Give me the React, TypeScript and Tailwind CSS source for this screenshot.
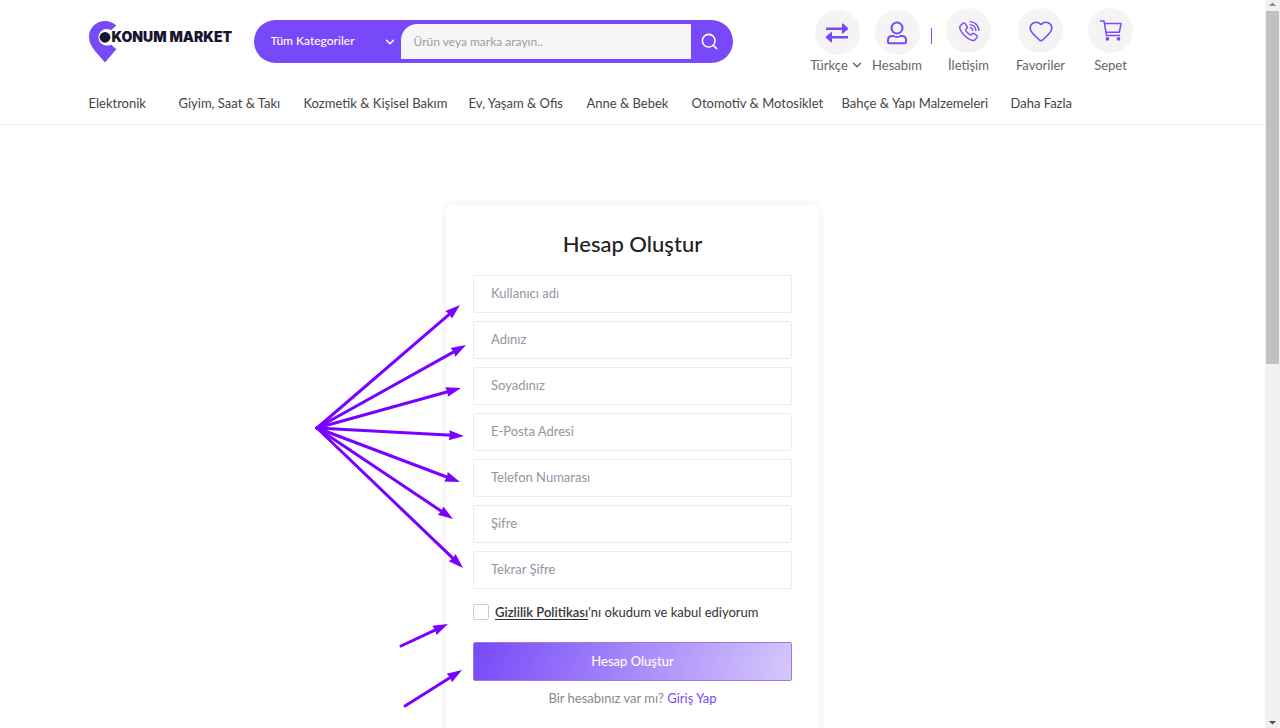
import { ReactNode } from "react";
import { ChevronDown, Heart, Search } from "lucide-react";

const categories = [
  "Elektronik",
  "Giyim, Saat & Takı",
  "Kozmetik & Kişisel Bakım",
  "Ev, Yaşam & Ofis",
  "Anne & Bebek",
  "Otomotiv & Motosiklet",
  "Bahçe & Yapı Malzemeleri",
  "Daha Fazla",
];

const fields = [
  { id: "username", label: "Kullanıcı adı", type: "text" },
  { id: "firstName", label: "Adınız", type: "text" },
  { id: "lastName", label: "Soyadınız", type: "text" },
  { id: "email", label: "E-Posta Adresi", type: "email" },
  { id: "phone", label: "Telefon Numarası", type: "tel" },
  { id: "password", label: "Şifre", type: "password" },
  { id: "passwordRepeat", label: "Tekrar Şifre", type: "password" },
];

// x1, y1, x2, y2 in the coordinates of the arrow layer
const arrows = [
  [17, 137, 160, 14],
  [17, 137, 166, 54],
  [17, 137, 161, 97],
  [17, 137, 164, 145],
  [17, 137, 160, 191],
  [17, 137, 153, 228],
  [17, 137, 163, 277],
  [101, 355, 148, 333],
  [105, 415, 162, 379],
];

function Logo() {
  return (
    <a href="#" aria-label="Konum Market" className="flex w-[165px] shrink-0 items-start">
      <svg width="28" height="42" viewBox="0 0 28 42" className="shrink-0">
        <path
          d="M16 0C7.200 0 0 7 0 15.800C0 20.800 2.300 25.300 5.600 29.500L16 41.500L27.300 28.200L22 23.400A8.300 8.300 0 1 1 22 9.200L27.300 4.600C24 1.600 20.400 0 16 0Z"
          fill="#7749f8"
        />
        <circle cx="16" cy="16.300" r="5.400" fill="#17142f" />
      </svg>
      <span className="-ml-[5px] mt-2 font-['Inter'] text-[14px]/4 font-black whitespace-nowrap text-[#17142f]">
        KONUM MARKET
      </span>
    </a>
  );
}

function SwapIcon() {
  return (
    <svg width="24" height="20" viewBox="0 0 24 20" fill="#7749f8">
      <path d="M1 4.500H17V1.200Q17 0 18 .600L23 5Q23.600 5.700 23 6.300L18 10.500Q17 11.200 17 10V7H1Z" />
      <path d="M23 13H7V10Q7 8.600 6 9.300L1 13.600Q.400 14.300 1 15L6 19.200Q7 20 7 18.600V15.500H23Z" />
    </svg>
  );
}

function AccountIcon() {
  return (
    <svg width="22" height="24" viewBox="0 0 22 24" fill="none" stroke="#7749f8" strokeWidth="2">
      <circle cx="11" cy="7" r="5.500" />
      <path
        d="M2 21V19Q2 15.500 5.500 15H7.500Q11 17 14.500 15H16.500Q20 15.500 20 19V21Q20 22.200 18.800 22.200H3.200Q2 22.200 2 21Z"
        strokeLinejoin="round"
      />
    </svg>
  );
}

function CallIcon() {
  return (
    <svg
      width="22"
      height="22"
      viewBox="0 0 22 22"
      fill="none"
      stroke="#7749f8"
      strokeWidth="1.400"
      strokeLinecap="round"
      strokeLinejoin="round"
    >
      <path d="M3 5L5 3.200Q6.200 2.400 7.100 3.600L9.100 6.500Q9.900 7.700 8.700 8.600L7.800 9.400Q7.300 10 7.800 10.700Q9.500 13.300 12 14.800Q12.700 15.300 13.200 14.700L14.100 13.800Q15 12.900 16.100 13.700L18.700 15.500Q20 16.400 19 17.600L17.400 19.400Q15.700 21 13.400 20.100Q5.500 17 2 9Q1.100 6.700 3 5Z" />
      <path d="M12.300 7.600Q14.500 7.900 14.900 10.300M12.200 4.600Q17.200 5.200 17.900 10.300M12.200 1.600Q20 2.400 20.900 10.300" />
    </svg>
  );
}

function CartIcon() {
  return (
    <svg
      width="22"
      height="21"
      viewBox="0 0 22 21"
      fill="none"
      stroke="#7749f8"
      strokeWidth="1.500"
      strokeLinejoin="round"
    >
      <path d="M0 1H4L6.500 15.500H20M4.400 3.500H21L19.300 12.300H6" />
      <circle cx="7.500" cy="18.800" r="1.100" fill="#7749f8" />
      <circle cx="18.500" cy="18.800" r="1.100" fill="#7749f8" />
    </svg>
  );
}

function HeaderLink({
  label,
  className,
  children,
  chevron,
}: {
  label: string;
  className: string;
  children: ReactNode;
  chevron?: boolean;
}) {
  return (
    <a
      href="#"
      className={`flex shrink-0 flex-col items-center text-[13px]/5 whitespace-nowrap text-[#666] ${className}`}
    >
      <span className="flex size-[45px] items-center justify-center rounded-full bg-[#f4f4f4]">
        {children}
      </span>
      <span className="flex items-center gap-0.5">
        {label}
        {chevron && <ChevronDown size={14} strokeWidth={2.5} />}
      </span>
    </a>
  );
}

function Header() {
  return (
    <header className="border-b border-[#ebebeb]">
      <div className="mx-auto h-[124px] max-w-[1088px]">
        <div className="flex h-[93px] items-start">
          <div className="pt-[21px]">
            <Logo />
          </div>
          <form className="mt-5 flex h-[43px] w-[479px] shrink-0 items-center rounded-full bg-[#7749f8] text-white">
            <div className="relative w-[147px]">
              <select
                aria-label="Kategori"
                className="block w-full appearance-none bg-transparent pb-0.5 pl-[17px] text-[12px]/5 font-medium outline-none"
              >
                <option>Tüm Kategoriler</option>
              </select>
              <ChevronDown
                size={14}
                strokeWidth={2.5}
                className="pointer-events-none absolute top-1 right-1"
              />
            </div>
            <input
              type="search"
              aria-label="Ürün ara"
              placeholder="Ürün veya marka arayın.."
              className="h-[35px] w-[290px] rounded-tl-2xl bg-[#f6f6f6] px-[13px] text-[12px] text-[#555] outline-none placeholder:text-[#9b9ba8]"
            />
            <button type="submit" aria-label="Ara" className="flex flex-1 items-center pl-[9px]">
              <Search size={19} strokeWidth={2} />
            </button>
          </form>
          <div className="ml-[77px] flex items-start pt-2.5">
            <HeaderLink label="Türkçe" className="w-[55px]" chevron>
              <SwapIcon />
            </HeaderLink>
            <HeaderLink label="Hesabım" className="w-[65px]">
              <AccountIcon />
            </HeaderLink>
            <span className="mt-[18px] ml-px h-4 w-px bg-[#7749f8]" />
          </div>
          <div className="flex items-start pt-2">
            <HeaderLink label="İletişim" className="w-[74px] gap-0.5">
              <CallIcon />
            </HeaderLink>
            <HeaderLink label="Favoriler" className="w-[70px] gap-0.5">
              <Heart size={26} strokeWidth={1.5} className="text-[#7749f8]" />
            </HeaderLink>
            <HeaderLink label="Sepet" className="w-[70px] gap-0.5">
              <CartIcon />
            </HeaderLink>
          </div>
        </div>
        <nav className="grid grid-cols-[90px_125px_165px_118px_105px_150px_169px_auto] text-[13px]/5 whitespace-nowrap text-[#444]">
          {categories.map((name) => (
            <a key={name} href="#">
              {name}
            </a>
          ))}
        </nav>
      </div>
    </header>
  );
}

function Arrows() {
  return (
    <svg
      width="180"
      height="430"
      viewBox="0 0 180 430"
      className="pointer-events-none absolute top-[86px] -left-[146px]"
    >
      {arrows.map(([x1, y1, x2, y2]) => {
        const length = Math.hypot(x2 - x1, y2 - y1);
        const angle = (Math.atan2(y2 - y1, x2 - x1) * 180) / Math.PI;
        return (
          <g key={`${x2}-${y2}`} transform={`translate(${x1} ${y1}) rotate(${angle})`}>
            <line x2={length - 12} stroke="#7a00ff" strokeWidth="3" strokeLinecap="round" />
            <path d={`M${length} 0L${length - 15} -5L${length - 14} 0L${length - 15} 5Z`} fill="#7a00ff" />
          </g>
        );
      })}
    </svg>
  );
}

function RegisterCard() {
  return (
    <section className="relative mx-auto mt-20 w-[373px] rounded-md bg-white px-[27px] pt-[23px] pb-10 shadow-[0_0_10px_rgba(0,0,0,0.08)]">
      <h1 className="text-center text-[22px]/8 font-medium text-[#222]">Hesap Oluştur</h1>
      <form className="mt-[15px]">
        <div className="flex flex-col gap-2">
          {fields.map((field) => (
            <input
              key={field.id}
              id={field.id}
              type={field.type}
              aria-label={field.label}
              placeholder={field.label}
              className="h-[38px] w-full rounded-xs border border-[#ebebeb] px-[17px] pb-0.5 text-[13px] text-[#333] outline-none placeholder:text-[#9494a2]"
            />
          ))}
        </div>
        <div className="mt-[13px] flex items-center gap-[6px] text-[13px]/5 text-[#333]">
          <input
            id="privacy"
            type="checkbox"
            className="size-4 appearance-none rounded-xs border border-[#ccc] bg-white"
          />
          <label htmlFor="privacy">
            <a href="#" className="font-semibold underline underline-offset-2">
              Gizlilik Politikası
            </a>
            'nı okudum ve kabul ediyorum
          </label>
        </div>
        <button
          type="submit"
          className="mt-5 h-[39px] w-full rounded-xs border border-[#9b79e6] bg-linear-110/srgb from-[#7749f8] to-[#d6c8fc] text-[13px] font-medium text-white"
        >
          Hesap Oluştur
        </button>
      </form>
      <p className="mt-[7px] text-center text-[13px]/5 text-[#888]">
        Bir hesabınız var mı?{" "}
        <a href="#" className="text-[#7749f8]">
          Giriş Yap
        </a>
      </p>
      <Arrows />
    </section>
  );
}

function ScrollTrack() {
  return (
    <div aria-hidden="true" className="flex w-[15px] shrink-0 flex-col items-center bg-[#f1f1f1]">
      <svg width="15" height="11" viewBox="0 0 15 11">
        <path d="M4 6L7.500 2.500L11 6Z" fill="#888" />
      </svg>
      <div className="h-[353px] w-[13px] bg-[#c1c1c1]" />
      <svg width="15" height="11" viewBox="0 0 15 11" className="mt-auto">
        <path d="M4 4L7.500 7.500L11 4Z" fill="#505050" />
      </svg>
    </div>
  );
}

export default function App() {
  return (
    <div className="flex h-screen overflow-hidden bg-white font-['Lato','Liberation_Sans',sans-serif]">
      <div className="min-w-0 flex-1 overflow-hidden">
        <Header />
        <main>
          <RegisterCard />
        </main>
      </div>
      <ScrollTrack />
    </div>
  );
}
